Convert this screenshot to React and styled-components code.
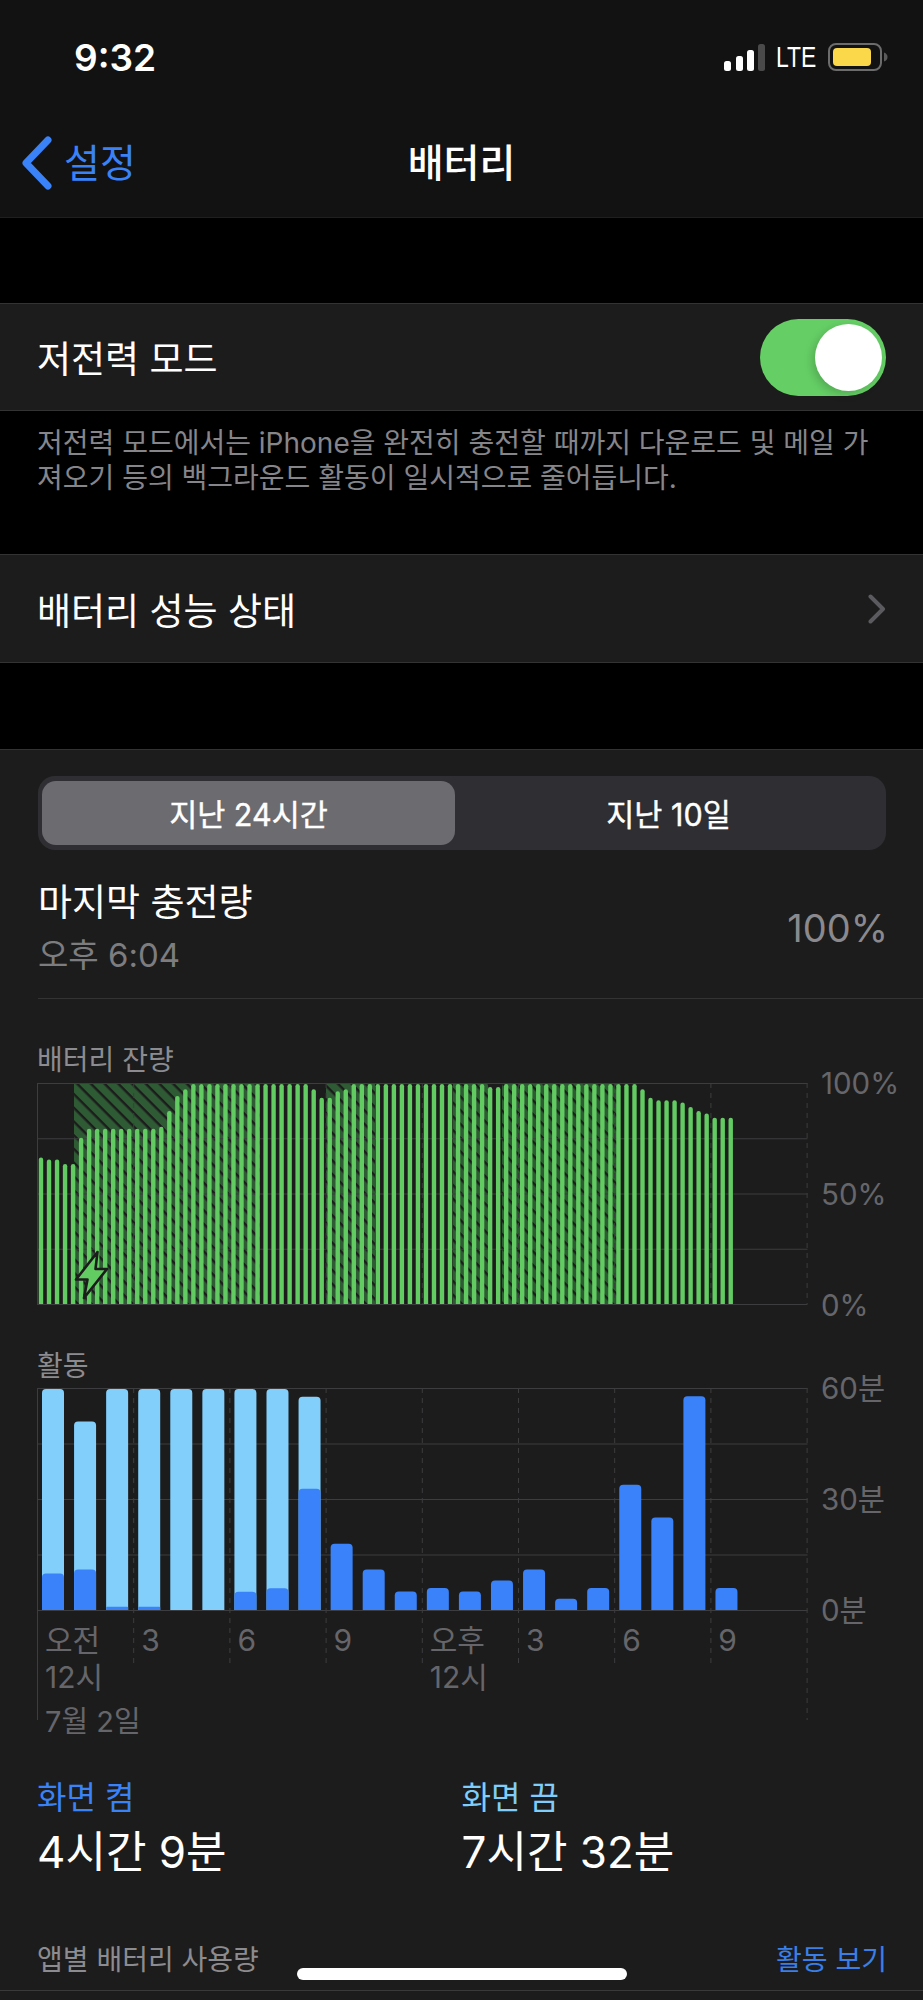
import React from "react";
import styled, { createGlobalStyle } from "styled-components";

const GlobalStyle = createGlobalStyle`
  html, body {
    margin: 0;
    padding: 0;
    background: #000;
  }
  * {
    box-sizing: border-box;
  }
`;

const Screen = styled.div`
  position: relative;
  width: 923px;
  height: 2000px;
  overflow: hidden;
  background: #000;
  color: #fff;
  font-family: Inter, "Noto Sans CJK KR", sans-serif;
`;

const Header = styled.header`
  height: 218px;
  background: #121212;
  border-bottom: 1px solid #1f1f1f;
`;

const StatusBar = styled.div`
  display: flex;
  align-items: center;
  justify-content: space-between;
  height: 114px;
  padding: 0 35px 0 74px;
`;

const Clock = styled.span`
  font-size: 37px;
  font-weight: 600;
`;

const StatusIcons = styled.div`
  display: flex;
  align-items: center;
  gap: 10px;
`;

const Lte = styled.span`
  width: 42px;
  font-family: "Liberation Sans", sans-serif;
  font-size: 26px;
  line-height: 28px;
  transform: scale(0.88, 1.13);
  transform-origin: left center;
`;

const Nav = styled.nav`
  display: grid;
  grid-template-columns: 1fr auto 1fr;
  align-items: center;
  height: 92px;
`;

const BackLink = styled.a`
  display: flex;
  align-items: center;
  gap: 12px;
  padding-left: 21px;
  color: #3a82f7;
  font-size: 39px;
`;

const Title = styled.h1`
  margin: 0;
  font-size: 39px;
  font-weight: 500;
`;

const Gap = styled.div`
  height: ${(p) => p.$h}px;
`;

const Row = styled.div`
  display: flex;
  align-items: center;
  justify-content: space-between;
  height: ${(p) => p.$h}px;
  padding: 0 37px 0 37px;
  background: #1c1c1c;
  border-top: 1px solid #333;
  border-bottom: 1px solid #333;
  font-size: 37px;
`;

const Toggle = styled.div`
  display: flex;
  justify-content: flex-end;
  width: 126px;
  height: 77px;
  padding: 5px 4px;
  border-radius: 39px;
  background: #65cf65;
`;

const Knob = styled.div`
  width: 67px;
  height: 67px;
  border-radius: 50%;
  background: #fff;
  box-shadow: -3px 3px 8px rgba(0, 0, 0, 0.18);
`;

const Note = styled.p`
  height: 143px;
  margin: 0;
  padding: 15px 37px 0;
  color: #85858a;
  font-size: 28px;
  line-height: 35px;
  white-space: nowrap;
`;

const Card = styled.section`
  height: 1251px;
  padding-top: 26px;
  background: #1c1c1c;
  border-top: 1px solid #333;
`;

const Segments = styled.div`
  display: grid;
  grid-template-columns: 413px 1fr;
  width: 848px;
  height: 74px;
  margin-left: 38px;
  padding: 5px 4px;
  border-radius: 17px;
  background: #2f2f33;
`;

const Segment = styled.div`
  display: flex;
  align-items: center;
  justify-content: center;
  border-radius: 14px;
  background: ${(p) => (p.$active ? "#6b6b70" : "transparent")};
  font-size: 30.5px;
  font-weight: 400;
  -webkit-text-stroke: 0.4px #fff;
`;

const Summary = styled.div`
  display: flex;
  align-items: center;
  justify-content: space-between;
  margin: 30px 0 44px 38px;
  padding: 0 35px 22px 0;
  border-bottom: 1px solid #333;
`;

const SummaryTitle = styled.div`
  font-size: 37px;
  line-height: 46px;
`;

const SummaryTime = styled.div`
  margin-top: 8px;
  color: #7d7d80;
  font-size: 33px;
  line-height: 42px;
`;

const SummaryValue = styled.div`
  color: #8a8a8e;
  font-size: 38px;
`;

const ChartLabel = styled.div`
  margin: ${(p) => p.$top || 0}px 0 0 37px;
  color: #8c8c90;
  font-size: 28px;
  line-height: 34px;
`;

const ChartRow = styled.div`
  display: flex;
  align-items: flex-start;
  margin: ${(p) => p.$top}px 0 0 37px;
`;

const Plot = styled.div`
  position: relative;
  flex: none;
  width: 772px;
  svg {
    display: block;
  }
`;

const Axis = styled.div`
  display: flex;
  flex-direction: column;
  justify-content: space-between;
  height: 256px;
  margin: -17px 0 -17px 12px;
  color: #66666a;
  font-size: 29.5px;
  line-height: 34px;
`;

const Ticks = styled.div`
  position: absolute;
  top: 234px;
  left: 8px;
  display: grid;
  grid-template-columns: repeat(8, 96.2px);
  color: #66666a;
  font-size: 30px;
  line-height: 37px;
`;

const DateLabel = styled.div`
  position: absolute;
  top: 315px;
  left: 8px;
  color: #66666a;
  font-size: 29px;
  line-height: 37px;
  white-space: nowrap;
`;

const Legend = styled.div`
  display: grid;
  grid-template-columns: 424.5px 1fr;
  margin: 57px 0 0 37px;
`;

const LegendName = styled.div`
  color: ${(p) => p.$color};
  font-size: 32px;
  line-height: 40px;
`;

const LegendValue = styled.div`
  margin-top: 6px;
  font-size: 44px;
  line-height: 56px;
`;

const UsageRow = styled.div`
  display: flex;
  align-items: center;
  justify-content: space-between;
  margin-top: 63px;
  padding: 0 36px 13px 37px;
  border-bottom: 1px solid #3a3a3a;
  color: #8c8c90;
  font-size: 28px;
  line-height: 34px;
`;

const UsageLink = styled.span`
  color: #3a7fe8;
`;

const HomeIndicator = styled.div`
  position: absolute;
  left: 297px;
  top: 1968px;
  width: 330px;
  height: 12px;
  border-radius: 6px;
  background: #fff;
`;

const HOUR = 96.2;
const GRID = "#3d3d3f";

const levels = [
  66.6, 65.7, 65.7, 63.6, 63.6, 75.6, 79.7, 79.7, 79.7, 79.7, 79.7, 79.7, 79.7, 79.7, 79.7, 80.6,
  87.7, 94.6, 97.6, ...Array(15).fill(100), 97.6, 93.7, 93.7, 96.7, 97.6, ...Array(17).fill(100),
  98.6, 98.6, ...Array(17).fill(100), 97.6, 93.7, 92.6, 92.6, 92.6, 91.6, 89.6, 87.7, 86.6, 84.7,
  84.7, 84.7,
];

// charging stretches, in plot pixels
const hatches = [
  [37, 223],
  [289, 338],
  [416, 451],
  [465, 580],
];

const activity = [
  [100, 16.5], [85.3, 18.3], [100, 1.5], [100, 1.5], [100, 0], [100, 0], [100, 8.3], [100, 9.8],
  [96.5, 54.9], [0, 30], [0, 18.3], [0, 8.4], [0, 10], [0, 8.4], [0, 13.4], [0, 18.3],
  [0, 5.1], [0, 10], [0, 56.7], [0, 41.8], [0, 96.7], [0, 10],
];

// rounded top, square bottom
const barPath = (x, top, w, bottom, r) =>
  `M${x} ${bottom}V${top + r}Q${x} ${top} ${x + r} ${top}H${x + w - r}Q${x + w} ${top} ${x + w} ${top + r}V${bottom}Z`;

const GridLines = ({ height, tickEnd, edgeEnd }) => {
  const ys = [0, 1, 2, 3, 4].map((i) => 0.5 + i * (height / 4));
  return (
    <g>
      {ys.map((y) => (
        <line key={y} x1="0" x2="770.5" y1={y} y2={y} stroke={GRID} strokeWidth="1.2" />
      ))}
      {Array.from({ length: 9 }, (_, i) => {
        const x = 0.5 + i * HOUR;
        const edge = i === 0 || i === 8;
        return (
          <line
            key={i}
            x1={x}
            x2={x}
            y1="0"
            y2={edge ? edgeEnd : tickEnd}
            stroke={GRID}
            strokeWidth="1"
            strokeDasharray={i === 0 ? "none" : "5 5"}
          />
        );
      })}
    </g>
  );
};

const BatteryChart = () => (
  <svg width="772" height="223" viewBox="0 0 772 223">
    <defs>
      <pattern
        id="charging"
        width="9.7"
        height="9.7"
        patternUnits="userSpaceOnUse"
        patternTransform="rotate(45)"
      >
        <rect width="9.7" height="9.7" fill="#2e5b34" />
        <rect width="9.7" height="2.4" fill="#1c1c1c" />
      </pattern>
    </defs>
    {hatches.map(([from, to]) => (
      <rect key={from} x={from} y="0.5" width={to - from} height="221" fill="url(#charging)" />
    ))}
    <GridLines height={221} tickEnd={221} edgeEnd={221} />
    {levels.map((level, i) => {
      const top = 221 - level * 2.2;
      return <path key={i} d={barPath(1.8 + i * 8.02, top, 4.4, 221, 2.2)} fill="#62cc62" />;
    })}
    <path
      d="M60.5 169L39 196.5H50.5L47 215L70 186H58.5Z"
      fill="#62cc62"
      stroke="#1c1c1c"
      strokeWidth="2.6"
      strokeLinejoin="round"
    />
  </svg>
);

const ActivityChart = () => (
  <svg width="772" height="333" viewBox="0 0 772 333">
    <GridLines height={222} tickEnd={277} edgeEnd={332} />
    {activity.map(([off, on], i) => {
      const x = 5 + i * 32.07;
      return (
        <g key={i}>
          {off > 0 && <path d={barPath(x, 222 - off * 2.21, 22, 222, 4)} fill="#82cffc" />}
          {on > 0 && <path d={barPath(x, 222 - on * 2.21, 22, 222, on < 3 ? 1 : 4)} fill="#3a82f9" />}
        </g>
      );
    })}
  </svg>
);

const SignalIcon = () => (
  <svg width="42" height="27" viewBox="0 0 42 27">
    <rect x="0" y="17" width="7" height="10" rx="2.5" fill="#fff" />
    <rect x="12" y="12" width="7" height="15" rx="2.5" fill="#fff" />
    <rect x="23" y="6" width="7" height="21" rx="2.5" fill="#fff" />
    <rect x="34" y="0" width="7" height="27" rx="2.5" fill="#4a4a4a" />
  </svg>
);

const BatteryIcon = () => (
  <svg width="60" height="28" viewBox="0 0 60 28">
    <rect x="1" y="1" width="52" height="26" rx="7" fill="none" stroke="#6c6c6c" strokeWidth="2" />
    <rect x="5" y="5" width="38" height="18" rx="4" fill="#fbd74a" />
    <path d="M56 9.5C58.5 10.5 59.5 12 59.5 14C59.5 16 58.5 17.5 56 18.5Z" fill="#5a5a5a" />
  </svg>
);

const BackIcon = () => (
  <svg width="31" height="60" viewBox="0 -6 31 60">
    <path d="M27 4L5 27L27 50" fill="none" stroke="#3a82f7" strokeWidth="7" strokeLinecap="round" strokeLinejoin="round" />
  </svg>
);

const ChevronIcon = () => (
  <svg width="18" height="30" viewBox="0 0 18 30">
    <path d="M2.5 2.5L15 15L2.5 27.5" fill="none" stroke="#5b5b5f" strokeWidth="4" strokeLinecap="round" strokeLinejoin="round" />
  </svg>
);

const App = () => (
  <Screen>
    <GlobalStyle />
    <Header>
      <StatusBar>
        <Clock>9:32</Clock>
        <StatusIcons>
          <SignalIcon />
          <Lte>LTE</Lte>
          <BatteryIcon />
        </StatusIcons>
      </StatusBar>
      <Nav>
        <BackLink>
          <BackIcon />
          설정
        </BackLink>
        <Title>배터리</Title>
      </Nav>
    </Header>
    <Gap $h={85} />
    <Row $h={108}>
      저전력 모드
      <Toggle>
        <Knob />
      </Toggle>
    </Row>
    <Note>
      저전력 모드에서는 iPhone을 완전히 충전할 때까지 다운로드 및 메일 가
      <br />
      져오기 등의 백그라운드 활동이 일시적으로 줄어듭니다.
    </Note>
    <Row $h={109}>
      배터리 성능 상태
      <ChevronIcon />
    </Row>
    <Gap $h={86} />
    <Card>
      <Segments>
        <Segment $active>지난 24시간</Segment>
        <Segment>지난 10일</Segment>
      </Segments>
      <Summary>
        <div>
          <SummaryTitle>마지막 충전량</SummaryTitle>
          <SummaryTime>오후 6:04</SummaryTime>
        </div>
        <SummaryValue>100%</SummaryValue>
      </Summary>

      <ChartLabel>배터리 잔량</ChartLabel>
      <ChartRow $top={6}>
        <Plot>
          <BatteryChart />
        </Plot>
        <Axis>
          <span>100%</span>
          <span>50%</span>
          <span>0%</span>
        </Axis>
      </ChartRow>

      <ChartLabel $top={43}>활동</ChartLabel>
      <ChartRow $top={5}>
        <Plot>
          <ActivityChart />
          <Ticks>
            <div>
              오전
              <br />
              12시
            </div>
            <div>3</div>
            <div>6</div>
            <div>9</div>
            <div>
              오후
              <br />
              12시
            </div>
            <div>3</div>
            <div>6</div>
            <div>9</div>
          </Ticks>
          <DateLabel>7월 2일</DateLabel>
        </Plot>
        <Axis>
          <span>60분</span>
          <span>30분</span>
          <span>0분</span>
        </Axis>
      </ChartRow>

      <Legend>
        <div>
          <LegendName $color="#3a82f7">화면 켬</LegendName>
          <LegendValue>4시간 9분</LegendValue>
        </div>
        <div>
          <LegendName $color="#7fcdfa">화면 끔</LegendName>
          <LegendValue>7시간 32분</LegendValue>
        </div>
      </Legend>

      <UsageRow>
        앱별 배터리 사용량
        <UsageLink>활동 보기</UsageLink>
      </UsageRow>
    </Card>
    <HomeIndicator />
  </Screen>
);

export default App;
